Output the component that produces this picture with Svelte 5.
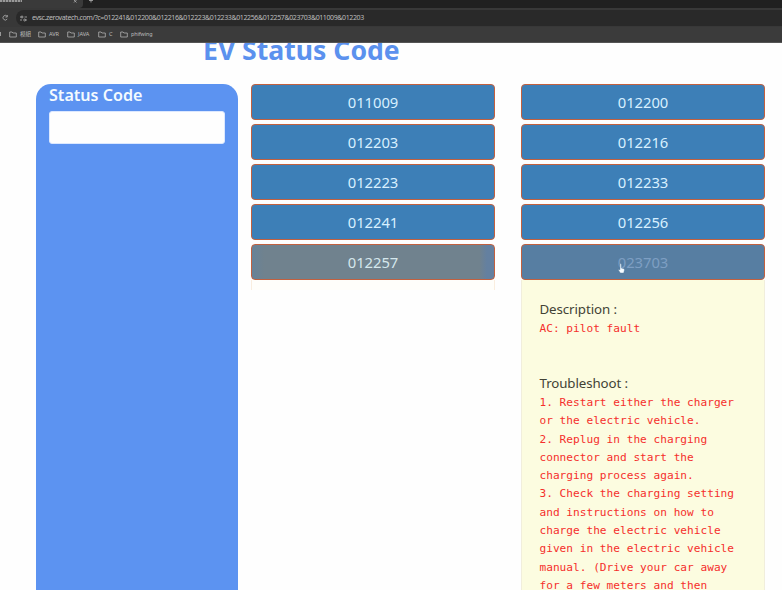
<script>
  const left = ['011009', '012203', '012223', '012241', '012257'];
  const right = ['012200', '012216', '012233', '012256', '023703'];
  const bookmarks = [
    { label: '模組', width: 29 },
    { label: 'AVR', width: 29 },
    { label: 'JAVA', width: 31 },
    { label: 'C', width: 22 },
    { label: 'phifwing', width: 40 }
  ];
  const steps = [
    '1. Restart either the charger',
    'or the electric vehicle.',
    '2. Replug in the charging',
    'connector and start the',
    'charging process again.',
    '3. Check the charging setting',
    'and instructions on how to',
    'charge the electric vehicle',
    'given in the electric vehicle',
    'manual. (Drive your car away',
    'for a few meters and then'
  ];
</script>

<div class="window">
  <header>
    <div class="tabs">
      <div class="tab"><i></i><svg width="5" height="4" viewBox="0 0 5 4"><path d="M1 0l2.5 2.5M3.5 0L1 2.5" /></svg></div>
      <svg class="plus" width="5" height="4" viewBox="0 0 5 4"><path d="M0 .5h4M2 0v2.5" /></svg>
    </div>
    <div class="address">
      <svg class="reload" width="8" height="8" viewBox="0 0 8 8"><path d="M6 2.2A2.3 2.3 0 1 0 6.2 5M6.3 1v2H4.4" /></svg>
      <div class="omnibox">
        <svg width="7" height="7" viewBox="0 0 7 7"><path d="M0 2h2.5M4.5 2H7M0 5h2M4 5h3" /><circle cx="2" cy="2" r="1" /><circle cx="4.7" cy="5" r="1" /></svg>
        <span>evsc.zerovatech.com/?c=012241&amp;012200&amp;012216&amp;012223&amp;012233&amp;012256&amp;012257&amp;023703&amp;011009&amp;012203</span>
      </div>
    </div>
    <div class="bookmarks">
      <i></i>
      {#each bookmarks as mark}
        <div class="mark" style="width: {mark.width}px">
          <svg width="8" height="7" viewBox="0 0 8 7"><path d="M.7 1h2.4l.8 1h3.4v4H.7z" /></svg>
          <span>{mark.label}</span>
        </div>
      {/each}
    </div>
  </header>

  <main>
    <h1>EV Status Code</h1>
    <div class="content">
      <aside>
        <label for="code">Status Code</label>
        <input id="code" type="text" />
      </aside>
      <section>
        {#each left as code, i}
          <button class:closing={i === 4}>{code}</button>
        {/each}
        <div class="sliver"></div>
      </section>
      <section>
        {#each right as code, i}
          <button class:active={i === 4}>{code}
            {#if i === 4}
              <svg class="pointer" width="7" height="11" viewBox="0 0 7 11"><path d="M2 1q1-1 1.3.4V5l2.6.7q.8.5.5 1.6L5.7 10H2.3L.4 7q.2-1 1.6-.2z" /></svg>
            {/if}
          </button>
        {/each}
        <div class="details">
          <h2>Description :</h2>
          <pre>AC: pilot fault</pre>
          <h2 class="second">Troubleshoot :</h2>
          <pre>{steps.join('\n')}</pre>
        </div>
      </section>
    </div>
  </main>
</div>

<style>
  :global(body) { margin: 0; overflow: hidden; }
  * { box-sizing: border-box; }
  .window { width: 782px; height: 590px; overflow: hidden; display: flex; flex-direction: column; background: #fefefe; font-family: "Noto Sans", "Open Sans", "Noto Sans CJK TC", sans-serif; }
  header { height: 43px; flex: none; background: #3b3b3b; border-bottom: 1px solid #555; color: #bdbdbd; }
  header svg { fill: none; stroke: #b0b0b0; stroke-width: .8; flex: none; }
  header circle { fill: #2a2a2a; }
  .tabs { height: 8px; overflow: hidden; background: #202020; display: flex; }
  .tab { width: 83px; height: 8px; background: #3a3a3a; border-radius: 0 0 4px 0; display: flex; justify-content: space-between; padding-right: 5px; }
  .tab i { width: 22px; height: 2px; background: repeating-linear-gradient(90deg, #999 0 2px, #606060 2px 3px); }
  .plus { margin-left: 6px; }
  .address { height: 19px; display: flex; align-items: center; background: #383838; padding: 2px 0 1px 1px; }
  .omnibox { margin-left: 7px; height: 16px; flex: 1; display: flex; align-items: center; gap: 5px; padding-left: 4px; border-radius: 8px 0 0 8px; background: #292929; }
  .omnibox span { font-size: 7px; line-height: 14px; letter-spacing: -.383px; white-space: nowrap; }
  .bookmarks { height: 14px; display: flex; align-items: center; }
  .bookmarks i { width: 1px; height: 4px; margin-right: 8px; background: #999; }
  .mark { display: flex; align-items: center; gap: 3px; flex: none; white-space: nowrap; }
  .mark span { font-size: 5.6px; line-height: 12px; letter-spacing: -.1px; }
  .mark:last-child span { font-size: 5.4px; }
  main { flex: 1; min-height: 0; overflow: hidden; }
  h1 { margin: -12px 0 0 203px; height: 52.9px; font-size: 26.6px; line-height: 38px; font-weight: 700; color: #5b91ee; white-space: nowrap; }
  .content { display: flex; align-items: flex-start; padding-left: 36px; }
  aside { width: 202px; height: 530px; flex: none; border-radius: 15px 15px 0 0; background: #5c93f1; padding: 0 13px; margin-right: 13px; display: flex; flex-direction: column; }
  label { height: 27.5px; line-height: 23px; font-size: 16.1px; font-weight: 600; color: #f4fbff; }
  input { width: 176px; height: 33px; border: 1px solid #dce8ff; border-radius: 3px; background: #fefefe; padding: 0 8px; outline: none; }
  section { width: 244px; flex: none; display: flex; flex-direction: column; margin-right: 26px; }
  button { position: relative; height: 36px; flex: none; margin: 0 0 4.1px; padding: 0; border: 1px solid #c2603f; border-radius: 4px; background: #3d7fb7; color: #d8f0ff; font: 14.8px/34px "Noto Sans", sans-serif; letter-spacing: -.05px; text-align: center; }
  button.closing, button.active { margin-bottom: 0; }
  .closing { background: linear-gradient(90deg, #678298 0, #70828e 5%, #70828e 94%, #6480a0 97%); color: #d5e7ec; }
  .active { background: #577ea2; color: #7e9fc3; }
  .pointer { position: absolute; left: 96px; top: 18px; fill: #f5fbff; stroke: #52799e; stroke-width: .4; }
  .sliver { height: 10px; border: solid #faeedf; border-width: 0 1px; background: #fffefa; }
  .details { height: 320px; background: #fcfce0; border: solid #f1eedc; border-width: 0 1px; padding: 18.8px 17px 0 17.5px; }
  h2 { margin: 0; height: 20.6px; font-size: 13.3px; line-height: 20px; font-weight: 400; color: #424235; letter-spacing: -.09px; }
  .second { margin-top: 35.4px; }
  pre { margin: 0; font: 11.15px/18.3px "DejaVu Sans Mono", monospace; color: #f52f2c; }
</style>
